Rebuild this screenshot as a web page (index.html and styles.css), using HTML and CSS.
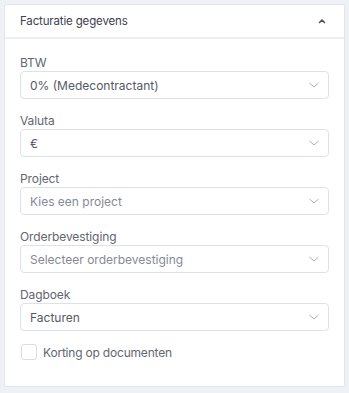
FILE: index.html
```html
<!DOCTYPE html>
<html>
<head>
<meta charset="utf-8">
<link rel="stylesheet" href="styles.css">
</head>
<body>
<div class="card">
  <div class="card-header">
    <span class="title">Facturatie gegevens</span>
    <svg class="caret" width="8" height="6" viewBox="0 0 8 6"><path d="M1.5 4.5 L4 2 L6.5 4.5" fill="none" stroke="#4a4f5a" stroke-width="1.5" stroke-linecap="round" stroke-linejoin="round"/></svg>
  </div>
  <div class="card-body">
    <div class="field">
      <div class="label">BTW</div>
      <div class="select"><span class="value">0% (Medecontractant)</span><svg class="chev" width="12" height="8" viewBox="0 0 12 8"><path d="M1.5 2 L6 6 L10.5 2" fill="none" stroke="#a9aeb8" stroke-width="1"/></svg></div>
    </div>
    <div class="field">
      <div class="label">Valuta</div>
      <div class="select"><span class="value">€</span><svg class="chev" width="12" height="8" viewBox="0 0 12 8"><path d="M1.5 2 L6 6 L10.5 2" fill="none" stroke="#a9aeb8" stroke-width="1"/></svg></div>
    </div>
    <div class="field">
      <div class="label">Project</div>
      <div class="select"><span class="value placeholder">Kies een project</span><svg class="chev" width="12" height="8" viewBox="0 0 12 8"><path d="M1.5 2 L6 6 L10.5 2" fill="none" stroke="#a9aeb8" stroke-width="1"/></svg></div>
    </div>
    <div class="field">
      <div class="label">Orderbevestiging</div>
      <div class="select"><span class="value placeholder">Selecteer orderbevestiging</span><svg class="chev" width="12" height="8" viewBox="0 0 12 8"><path d="M1.5 2 L6 6 L10.5 2" fill="none" stroke="#a9aeb8" stroke-width="1"/></svg></div>
    </div>
    <div class="field">
      <div class="label">Dagboek</div>
      <div class="select"><span class="value">Facturen</span><svg class="chev" width="12" height="8" viewBox="0 0 12 8"><path d="M1.5 2 L6 6 L10.5 2" fill="none" stroke="#a9aeb8" stroke-width="1"/></svg></div>
    </div>
    <label class="check">
      <span class="box"></span>
      <span class="check-label">Korting op documenten</span>
    </label>
  </div>
</div>
</body>
</html>
```

FILE: styles.css
```css
html, body {
  margin: 0;
  padding: 0;
  background: #eef1f5;
}
body {
  padding: 4px;
  font-family: "Inter", "Roboto", sans-serif;
  color: #4a4f5a;
}
.card {
  background: #ffffff;
  border: 1px solid #e2e6ec;
  border-radius: 2px;
  box-sizing: border-box;
  width: 341px;
  height: 383px;
}
.card-header {
  height: 32px;
  border-bottom: 2px solid #eceff3;
  display: flex;
  align-items: center;
  justify-content: space-between;
  padding: 0 18px 0 15px;
}
.title {
  font-size: 11.5px;
  color: #3c414b;
  letter-spacing: -0.15px;
}
.caret {
  display: block;
}
.card-body {
  padding: 16px 15px 0 15px;
}
.field {
  margin-bottom: 14px;
}
.label {
  font-size: 12px;
  line-height: 16px;
  color: #62666f;
  letter-spacing: -0.1px;
}
.select {
  height: 28px;
  box-sizing: border-box;
  border: 1px solid #dde2ea;
  border-radius: 4px;
  display: flex;
  align-items: center;
  justify-content: space-between;
  padding: 0 8px 0 9px;
}
.value {
  font-size: 12px;
  color: #555a63;
  letter-spacing: 0;
}
.value.placeholder {
  color: #858a93;
}
.chev {
  display: block;
}
.check {
  display: flex;
  align-items: center;
  gap: 6px;
  margin-top: -1px;
}
.box {
  width: 16px;
  height: 16px;
  box-sizing: border-box;
  border: 1px solid #d9dee6;
  border-radius: 3px;
  margin-left: 1px;
}
.check-label {
  font-size: 12px;
  color: #62666f;
  letter-spacing: -0.2px;
}
```
